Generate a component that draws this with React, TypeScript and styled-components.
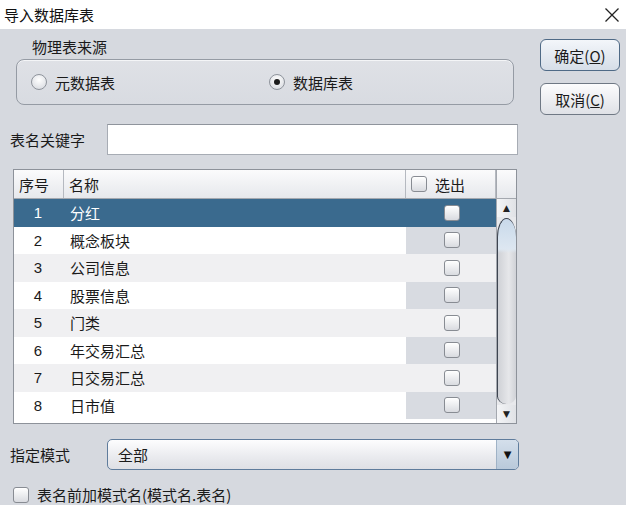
import React from "react";
import styled, { createGlobalStyle } from "styled-components";

const Global = createGlobalStyle`
  html, body { margin: 0; padding: 0; }
  body {
    background: #d6d9df;
    font-family: "Noto Sans CJK SC", "Liberation Sans", sans-serif;
    font-size: 15px;
    color: #1a1a1a;
    width: 626px;
    height: 505px;
    overflow: hidden;
  }
  * { box-sizing: border-box; }
`;

const Window = styled.div`
  width: 626px;
  height: 505px;
  display: flex;
  flex-direction: column;
`;

const TitleBar = styled.div`
  height: 30px;
  background: #ffffff;
  display: flex;
  align-items: center;
  justify-content: space-between;
  padding: 0 6px 0 4px;
  font-size: 15px;
  color: #111;
`;

const CloseIcon = styled.svg`
  width: 16px;
  height: 16px;
  margin-top: 1px;
`;

const Body = styled.div`
  flex: 1;
  display: grid;
  grid-template-columns: 509px 80px;
  column-gap: 21px;
  padding: 8px 0 0 10px;
`;

const Main = styled.div`
  display: flex;
  flex-direction: column;
`;

const GroupTitle = styled.div`
  margin-left: 22px;
  height: 22px;
  line-height: 20px;
  font-size: 15px;
`;

const GroupBox = styled.div`
  margin-left: 6px;
  width: 498px;
  height: 46px;
  border: 1px solid #959ba4;
  border-radius: 8px;
  background: linear-gradient(#dfe1e6, #d8dbe1);
  box-shadow: inset 0 1px 0 #f4f5f7;
  display: flex;
  align-items: center;
  padding-left: 14px;
`;

const RadioItem = styled.label<{ $w?: number }>`
  display: flex;
  align-items: center;
  gap: 8px;
  width: ${(p) => p.$w ?? 100}px;
`;

const RadioCircle = styled.span<{ $on?: boolean }>`
  width: 16px;
  height: 16px;
  border-radius: 50%;
  border: 1px solid #8f949c;
  background: radial-gradient(circle at 50% 35%, #ffffff, #d3d6dc);
  display: inline-flex;
  align-items: center;
  justify-content: center;
  &::after {
    content: "";
    width: 6px;
    height: 6px;
    border-radius: 50%;
    background: ${(p) => (p.$on ? "#1c1c1c" : "transparent")};
  }
`;

const FieldRow = styled.div<{ $mt: number }>`
  margin-top: ${(p) => p.$mt}px;
  height: 31px;
  display: flex;
  align-items: center;
`;

const FieldLabel = styled.div`
  width: 97px;
  font-size: 15px;
`;

const TextInput = styled.div`
  width: 411px;
  height: 31px;
  background: #fff;
  border: 1px solid #a7acb4;
  border-top-color: #8f949c;
`;

const Table = styled.div`
  margin-top: 14px;
  margin-left: 3px;
  width: 504px;
  height: 255px;
  border: 1px solid #8d929a;
  display: grid;
  grid-template-columns: 482px 20px;
  background: #fff;
  overflow: hidden;
`;

const Grid = styled.div`
  display: flex;
  flex-direction: column;
`;

const Cols = `50px 342px 90px`;

const HeaderRow = styled.div`
  height: 29px;
  display: grid;
  grid-template-columns: ${Cols};
  background: linear-gradient(#fbfbfc, #e6e8ec);
  border-bottom: 1px solid #a4a8af;
`;

const HeaderCell = styled.div`
  display: flex;
  align-items: center;
  gap: 8px;
  padding-left: 5px;
  border-right: 1px solid #b5b9c0;
  font-size: 15px;
`;

const Row = styled.div<{ $sel?: boolean; $alt?: boolean }>`
  height: 27.5px;
  display: grid;
  grid-template-columns: ${Cols};
  background: ${(p) => (p.$sel ? "#3a6a8e" : p.$alt ? "#f0f0f2" : "#ffffff")};
  color: ${(p) => (p.$sel ? "#ffffff" : "#1a1a1a")};
`;

const NumCell = styled.div`
  display: flex;
  align-items: center;
  justify-content: center;
  padding-right: 2px;
  font-family: "Liberation Sans", sans-serif;
  font-size: 15px;
`;

const NameCell = styled.div`
  display: flex;
  align-items: center;
  padding-left: 6px;
  font-size: 15px;
`;

const SelCell = styled.div<{ $bg: string }>`
  display: flex;
  align-items: center;
  justify-content: center;
  background: ${(p) => p.$bg};
  padding-left: 2px;
`;

const Check = styled.span`
  display: inline-block;
  width: 16px;
  height: 16px;
  border: 1px solid #888c93;
  border-radius: 3px;
  background: linear-gradient(#ffffff, #d9dbe0);
  box-shadow: inset 0 1px 0 #fff;
`;

const ScrollCol = styled.div`
  display: flex;
  flex-direction: column;
  border-left: 1px solid #a4a8af;
  background: #e8e9ec;
`;

const ScrollCorner = styled.div`
  height: 29px;
  background: linear-gradient(#fbfbfc, #e6e8ec);
  border-bottom: 1px solid #a4a8af;
`;

const ScrollArrow = styled.div`
  height: 18px;
  display: flex;
  align-items: center;
  justify-content: center;
  font-size: 9px;
  color: #222;
  font-family: "DejaVu Sans", sans-serif;
  background: linear-gradient(90deg, #f4f5f7, #e0e2e6);
`;

const Thumb = styled.div`
  flex: 1;
  margin: 1px 0 1px 0;
  border-radius: 10px 10px 10px 10px / 20px 20px 8px 8px;
  border-left: 1.5px solid #3d4450;
  border-top: 1.5px solid #3d4450;
  background:
    linear-gradient(180deg, #c9d9ea 0px, #dde7f1 30px, transparent 34px),
    linear-gradient(90deg, #cfd1d6, #e6e7ea 60%, #d0d2d7);
`;

const Combo = styled.div`
  width: 412px;
  height: 31px;
  border: 1.5px solid #5f7c9c;
  border-radius: 5px;
  background: linear-gradient(#fdfdfe, #e9eaee 60%, #dfe0e5);
  display: flex;
  align-items: center;
  overflow: hidden;
`;

const ComboText = styled.div`
  flex: 1;
  padding-left: 10px;
  font-size: 15px;
`;

const ComboBtn = styled.div`
  width: 22px;
  height: 100%;
  background: linear-gradient(#d4dfeb, #b9c9da);
  border-left: 1px solid #9fb2c6;
  display: flex;
  align-items: center;
  justify-content: center;
  font-size: 10px;
  color: #111;
  font-family: "DejaVu Sans", sans-serif;
`;

const CheckRow = styled.label`
  margin-top: 14px;
  margin-left: 3px;
  display: flex;
  align-items: center;
  gap: 8px;
  font-size: 15px;
`;

const Side = styled.div`
  display: flex;
  flex-direction: column;
  gap: 12px;
  padding-top: 2px;
`;

const Button = styled.button<{ $def?: boolean }>`
  width: 80px;
  height: 32px;
  border-radius: 6px;
  border: 1.5px solid ${(p) => (p.$def ? "#4f6a86" : "#6f7884")};
  background: ${(p) =>
    p.$def
      ? "linear-gradient(#f3f6fa, #d6dee8)"
      : "linear-gradient(#fcfcfd, #dfe1e6)"};
  font-family: "Noto Sans CJK SC", "Liberation Sans", sans-serif;
  font-size: 15px;
  color: #1a1a1a;
  padding: 0;
  display: flex;
  align-items: center;
  justify-content: center;
  u { text-decoration: underline; }
`;

const rows = ["分红", "概念板块", "公司信息", "股票信息", "门类", "年交易汇总", "日交易汇总", "日市值"];

export default function App() {
  return (
    <Window>
      <Global />
      <TitleBar>
        <span>导入数据库表</span>
        <CloseIcon viewBox="0 0 16 16">
          <path d="M1.5 1.5 L14.5 14.5 M14.5 1.5 L1.5 14.5" stroke="#222" strokeWidth="1.3" fill="none" />
        </CloseIcon>
      </TitleBar>
      <Body>
        <Main>
          <GroupTitle>物理表来源</GroupTitle>
          <GroupBox>
            <RadioItem $w={238}>
              <RadioCircle />
              元数据表
            </RadioItem>
            <RadioItem $w={120}>
              <RadioCircle $on />
              数据库表
            </RadioItem>
          </GroupBox>
          <FieldRow $mt={19}>
            <FieldLabel>表名关键字</FieldLabel>
            <TextInput />
          </FieldRow>
          <Table>
            <Grid>
              <HeaderRow>
                <HeaderCell>序号</HeaderCell>
                <HeaderCell>名称</HeaderCell>
                <HeaderCell>
                  <Check />
                  选出
                </HeaderCell>
              </HeaderRow>
              {rows.map((name, i) => {
                const sel = i === 0;
                const alt = i % 2 === 0 && i !== 0;
                const selBg = sel ? "#3a6a8e" : alt ? "#f0f0f2" : "#d8dbe1";
                return (
                  <Row key={name} $sel={sel} $alt={alt}>
                    <NumCell>{i + 1}</NumCell>
                    <NameCell>{name}</NameCell>
                    <SelCell $bg={selBg}>
                      <Check />
                    </SelCell>
                  </Row>
                );
              })}
            </Grid>
            <ScrollCol>
              <ScrollCorner />
              <ScrollArrow>▲</ScrollArrow>
              <Thumb />
              <ScrollArrow>▼</ScrollArrow>
            </ScrollCol>
          </Table>
          <FieldRow $mt={15}>
            <FieldLabel>指定模式</FieldLabel>
            <Combo>
              <ComboText>全部</ComboText>
              <ComboBtn>▼</ComboBtn>
            </Combo>
          </FieldRow>
          <CheckRow>
            <Check />
            表名前加模式名(模式名.表名)
          </CheckRow>
        </Main>
        <Side>
          <Button $def>
            确定(<u>O</u>)
          </Button>
          <Button>
            取消(<u>C</u>)
          </Button>
        </Side>
      </Body>
    </Window>
  );
}
